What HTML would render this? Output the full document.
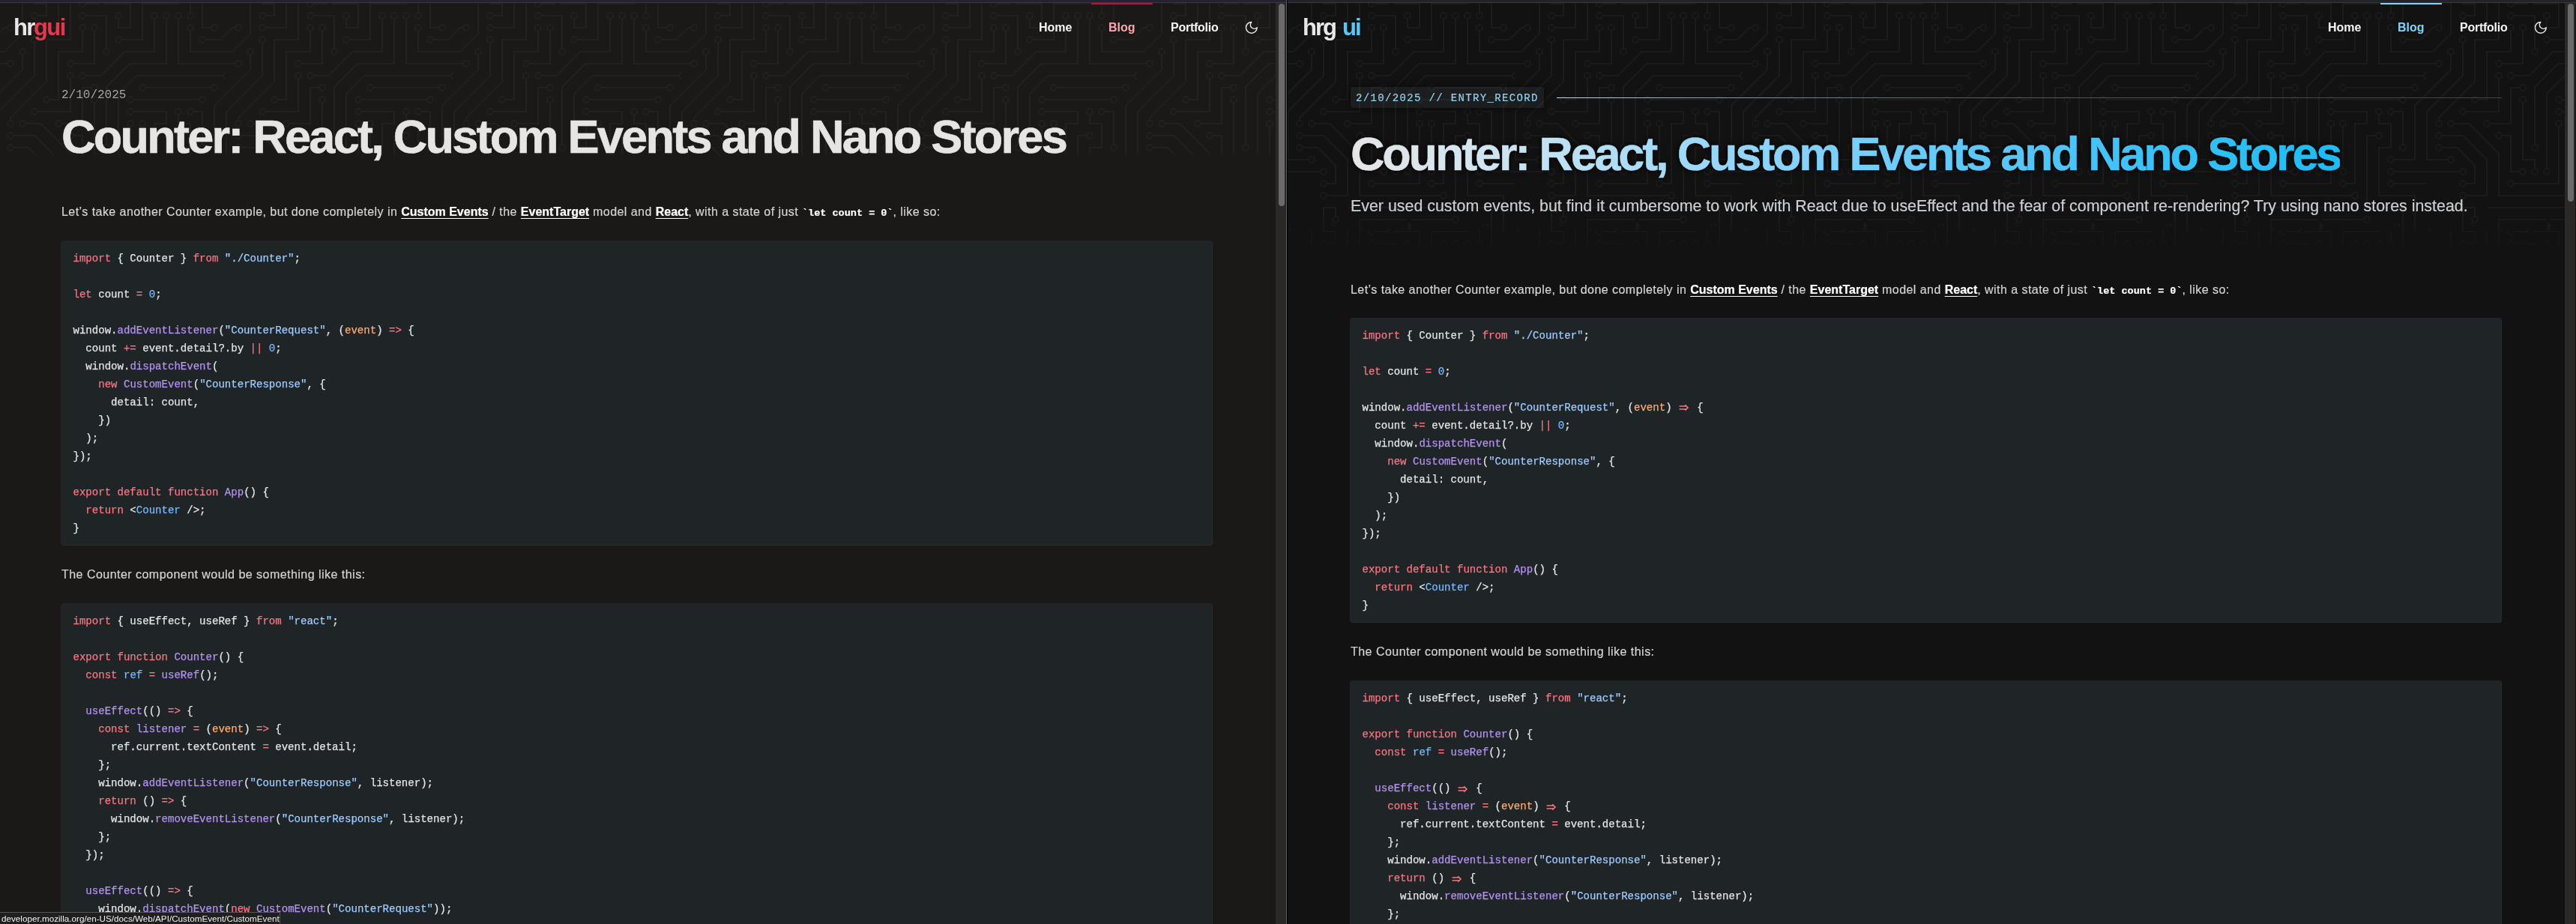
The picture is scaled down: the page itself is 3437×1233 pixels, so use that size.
<!DOCTYPE html><html><head><meta charset="utf-8"><style>html,body{margin:0;padding:0;background:#000;}body{width:3437px;height:1233px;overflow:hidden;position:relative;}.t{will-change:transform}</style></head><body>
<div style="position:absolute;left:0;top:0;width:1716px;height:1233px;background:#1a1917;overflow:hidden">
<svg style="position:absolute;left:0px;top:4px" width="1716" height="240"><defs><pattern id="pL" width="304" height="304" patternUnits="userSpaceOnUse" patternTransform="translate(-3,0)"><path d="M44.1 224a5 5 0 1 1 0 2H0v-2h44.1zm160 48a5 5 0 1 1 0 2H82v-2h122.1zm57.8-46a5 5 0 1 1 0-2H304v2h-42.1zm0 16a5 5 0 1 1 0-2H304v2h-42.1zm6.2-114a5 5 0 1 1 0 2h-86.2a5 5 0 1 1 0-2h86.2zm-256-48a5 5 0 1 1 0 2H0v-2h12.1zm185.8 34a5 5 0 1 1 0-2h86.2a5 5 0 1 1 0 2h-86.2zM258 12.1a5 5 0 1 1-2 0V0h2v12.1zm-64 208a5 5 0 1 1-2 0v-54.2a5 5 0 1 1 2 0v54.2zm48-198.2V80h62v2h-64V21.9a5 5 0 1 1 2 0zm16 16V64h46v2h-48V37.9a5 5 0 1 1 2 0zm-128 96V208h16v12.1a5 5 0 1 1-2 0V210h-16v-76.1a5 5 0 1 1 2 0zm-5.900-21.9a5 5 0 1 1 0 2H114v48H85.9a5 5 0 1 1 0-2H112v-48h12.1zm-6.2 130a5 5 0 1 1 0-2H176v-74.1a5 5 0 1 1 2 0V242h-60.1zm-16-64a5 5 0 1 1 0-2H114v48h10.1a5 5 0 1 1 0 2H112v-48h-10.1zM66 284.1a5 5 0 1 1-2 0V274H50v30h-2v-32h18v12.1zM236.1 176a5 5 0 1 1 0 2H226v94h48v32h-2v-30h-48v-98h12.1zm25.8-30a5 5 0 1 1 0-2H274v44.1a5 5 0 1 1-2 0V146h-10.1zm-64 96a5 5 0 1 1 0-2H208v-80h16v-14h-42.1a5 5 0 1 1 0-2H226v18h-16v80h-12.1zm86.2-210a5 5 0 1 1 0 2H272V0h2v32h10.1zM98 101.9V146H53.9a5 5 0 1 1 0-2H96v-42.1a5 5 0 1 1 2 0zM53.9 34a5 5 0 1 1 0-2H80V0h2v34H53.9zm60.1 3.9V66H82v64H69.9a5 5 0 1 1 0-2H80V64h32V37.9a5 5 0 1 1 2 0zM101.9 82a5 5 0 1 1 0-2H128V37.9a5 5 0 1 1 2 0V82h-28.1zm16-64a5 5 0 1 1 0-2H146v44.1a5 5 0 1 1-2 0V18h-26.1zm102.2 270a5 5 0 1 1 0 2H98v14h-2v-16h124.1zM242 149.9V160h16v34h-16v62h48v48h-2v-46h-48v-66h16v-30h-16v-12.1a5 5 0 1 1 2 0zM53.9 18a5 5 0 1 1 0-2H64V2H48V0h18v18H53.9zm112 32a5 5 0 1 1 0-2H192V0h50v2h-48v48h-28.1zm-48-48a5 5 0 0 1-9.8-2h2.07a3 3 0 1 0 5.66 0H178v34h-18V21.9a5 5 0 1 1 2 0V32h14V2h-58.1zm0 96a5 5 0 1 1 0-2H137l32-32h39V21.9a5 5 0 1 1 2 0V66h-40.17l-32 32H117.9zm28.1 90.1a5 5 0 1 1-2 0v-76.51L175.590 80H224V21.9a5 5 0 1 1 2 0V82h-49.59L146 112.41v75.69zm16 32a5 5 0 1 1-2 0v-99.51L184.590 96H300.1a5 5 0 0 1 3.9-3.9v2.07a3 3 0 0 0 0 5.66v2.07a5 5 0 0 1-3.9-3.9H185.41L162 121.41v98.69zm-144-64a5 5 0 1 1-2 0v-3.51l48-48V48h32V0h2v50H66v55.41l-48 48v2.69zM50 53.9v43.51l-48 48V208h26.1a5 5 0 1 1 0 2H0v-65.41l48-48V53.9a5 5 0 1 1 2 0zm-16 16V89.41l-34 34v-2.82l32-32V69.9a5 5 0 1 1 2 0zM12.1 32a5 5 0 1 1 0 2H9.41L0 43.41V40.6L8.59 32h3.51zm265.8 18a5 5 0 1 1 0-2h18.69l7.41-7.410v2.82L297.41 50H277.9zm-16 160a5 5 0 1 1 0-2H288v-71.41l16-16v2.82l-14 14V210h-28.1zm-208 32a5 5 0 1 1 0-2H64v-22.59L40.59 194H21.9a5 5 0 1 1 0-2H41.41L66 216.59V242H53.9zm150.2 14a5 5 0 1 1 0 2H96v-56.6L56.6 162H37.9a5 5 0 1 1 0-2h19.5L98 200.6V256h106.1zm-150.2 2a5 5 0 1 1 0-2H80v-46.59L48.59 178H21.9a5 5 0 1 1 0-2H49.41L82 208.59V258H53.9zM34 39.8v1.61L9.41 66H0v-2h8.59L32 40.59V0h2v39.8zM2 300.1a5 5 0 0 1 3.9 3.9H3.83A3 3 0 0 0 0 302.17V304h2v-3.9zm264.1-6a5 5 0 0 1 3.9 3.9h-2.07a3 3 0 0 0-5.66 0H260v-2h6.1zm-206 0a5 5 0 0 1 3.9 3.9h-2.07a3 3 0 0 0-5.66 0H56v-2h4.1zM134 304a5 5 0 0 1 3.9-3.9v2.07a3 3 0 0 0-1.83 1.83H134zm-36 0a5 5 0 0 1 3.9-3.9v2.07A3 3 0 0 0 100.07 304H98zm64-3.9V304h2v-3.9a3 3 0 0 0 0-5.66V292.3a5 5 0 0 1-2 0v7.8z" fill="#fff"/><g fill="#000"><circle cx="49" cy="225" r="3.0"/><circle cx="209" cy="273" r="3.0"/><circle cx="257" cy="225" r="3.0"/><circle cx="257" cy="241" r="3.0"/><circle cx="273" cy="129" r="3.0"/><circle cx="177" cy="129" r="3.0"/><circle cx="17" cy="81" r="3.0"/><circle cx="193" cy="113" r="3.0"/><circle cx="289" cy="113" r="3.0"/><circle cx="257" cy="17" r="3.0"/><circle cx="193" cy="225" r="3.0"/><circle cx="193" cy="161" r="3.0"/><circle cx="241" cy="17" r="3.0"/><circle cx="257" cy="33" r="3.0"/><circle cx="145" cy="225" r="3.0"/><circle cx="129" cy="129" r="3.0"/><circle cx="129" cy="113" r="3.0"/><circle cx="81" cy="161" r="3.0"/><circle cx="113" cy="241" r="3.0"/><circle cx="177" cy="161" r="3.0"/><circle cx="97" cy="177" r="3.0"/><circle cx="129" cy="225" r="3.0"/><circle cx="65" cy="289" r="3.0"/><circle cx="241" cy="177" r="3.0"/><circle cx="257" cy="145" r="3.0"/><circle cx="273" cy="193" r="3.0"/><circle cx="193" cy="241" r="3.0"/><circle cx="177" cy="145" r="3.0"/><circle cx="289" cy="33" r="3.0"/><circle cx="49" cy="145" r="3.0"/><circle cx="97" cy="97" r="3.0"/><circle cx="49" cy="33" r="3.0"/><circle cx="65" cy="129" r="3.0"/><circle cx="113" cy="33" r="3.0"/><circle cx="97" cy="81" r="3.0"/><circle cx="129" cy="33" r="3.0"/><circle cx="113" cy="17" r="3.0"/><circle cx="145" cy="65" r="3.0"/><circle cx="225" cy="289" r="3.0"/><circle cx="241" cy="145" r="3.0"/><circle cx="49" cy="17" r="3.0"/><circle cx="161" cy="49" r="3.0"/><circle cx="113" cy="1" r="3.0"/><circle cx="113" cy="305" r="3.0"/><circle cx="161" cy="17" r="3.0"/><circle cx="113" cy="97" r="3.0"/><circle cx="209" cy="17" r="3.0"/><circle cx="145" cy="193" r="3.0"/><circle cx="225" cy="17" r="3.0"/><circle cx="161" cy="225" r="3.0"/><circle cx="1" cy="97" r="3.0"/><circle cx="305" cy="97" r="3.0"/><circle cx="17" cy="161" r="3.0"/><circle cx="33" cy="209" r="3.0"/><circle cx="49" cy="49" r="3.0"/><circle cx="33" cy="65" r="3.0"/><circle cx="17" cy="33" r="3.0"/><circle cx="273" cy="49" r="3.0"/><circle cx="257" cy="209" r="3.0"/><circle cx="49" cy="241" r="3.0"/><circle cx="17" cy="193" r="3.0"/><circle cx="209" cy="257" r="3.0"/><circle cx="33" cy="161" r="3.0"/><circle cx="49" cy="257" r="3.0"/><circle cx="17" cy="177" r="3.0"/><circle cx="1" cy="1" r="3.0"/><circle cx="1" cy="305" r="3.0"/><circle cx="305" cy="1" r="3.0"/><circle cx="305" cy="305" r="3.0"/><circle cx="265.1" cy="-5" r="3.0"/><circle cx="265.1" cy="299" r="3.0"/><circle cx="59.1" cy="-5" r="3.0"/><circle cx="59.1" cy="299" r="3.0"/><circle cx="138.9" cy="1" r="3.0"/><circle cx="138.9" cy="305" r="3.0"/><circle cx="102.9" cy="1" r="3.0"/><circle cx="102.9" cy="305" r="3.0"/><circle cx="163" cy="287.4" r="3.0"/></g></pattern><linearGradient id="gL" x1="0" y1="0" x2="0" y2="240" gradientUnits="userSpaceOnUse"><stop offset="0.817" stop-color="#fff" stop-opacity="0.035"/><stop offset="0.871" stop-color="#fff" stop-opacity="0"/></linearGradient><mask id="mL" maskUnits="userSpaceOnUse" x="0" y="0" width="1716" height="240"><rect width="1716" height="240" fill="url(#pL)"/></mask></defs><rect width="1716" height="240" fill="url(#gL)" mask="url(#mL)"/></svg>
<div class="t" style="position:absolute;left:1386.00px;top:26.76px;white-space:pre;font:700 16px/19px 'Liberation Sans', sans-serif;color:#f5f5f4;letter-spacing:0px;">Home</div>
<div class="t" style="position:absolute;left:1479.00px;top:26.76px;white-space:pre;font:700 16px/19px 'Liberation Sans', sans-serif;color:#fda4af;letter-spacing:0px;">Blog</div>
<div class="t" style="position:absolute;left:1562.00px;top:26.76px;white-space:pre;font:700 16px/19px 'Liberation Sans', sans-serif;color:#f5f5f4;letter-spacing:-0.26px;">Portfolio</div>
<svg style="position:absolute;left:1660.4px;top:26.5px" width="19.7" height="19.7" viewBox="0 0 24 24" fill="none" stroke="#e7e5e4" stroke-width="1.75" stroke-linecap="round" stroke-linejoin="round"><path d="M12 3a6 6 0 0 0 9 9 9 9 0 1 1-9-9Z"/></svg>
<div style="position:absolute;left:1456px;top:4px;width:82px;height:2px;background:#be123c"></div>
<div class="t" style="position:absolute;left:18.00px;top:17.76px;white-space:pre;font:700 31px/37px 'Liberation Sans', sans-serif;color:#e8e8e8;letter-spacing:-1.6px;">hr</div>
<div class="t" style="position:absolute;left:45.00px;top:17.76px;white-space:pre;font:700 31px/37px 'Liberation Sans', sans-serif;color:#e5384f;letter-spacing:-1.6px;">gui</div>
<div class="t" style="position:absolute;left:81.50px;top:118.24px;white-space:pre;font:400 16px/19px 'Liberation Mono', monospace;color:#a8a29e;letter-spacing:0px;">2/10/2025</div>
<div class="t" style="position:absolute;left:82.10px;top:144.17px;white-space:pre;font:700 63px/76px 'Liberation Sans', sans-serif;color:#e7e5e4;letter-spacing:-2.74px;-webkit-text-stroke:0.6px #e7e5e4;">Counter: React, Custom Events and Nano Stores</div>
<div class="t" style="position:absolute;left:82.00px;top:272.56px;white-space:pre;font:400 16px/19px 'Liberation Sans', sans-serif;color:#d6d3d1;letter-spacing:0.45px;-webkit-text-stroke:0.2px currentColor;">Let’s take another Counter example, but done completely in <span style="font-weight:700;font-size:16px;letter-spacing:0;color:#fff;text-decoration:underline;text-underline-offset:3px;text-decoration-thickness:1px">Custom Events</span> / the <span style="font-weight:700;font-size:16px;letter-spacing:0;color:#fff;text-decoration:underline;text-underline-offset:3px;text-decoration-thickness:1px">EventTarget</span> model and <span style="font-weight:700;font-size:16px;letter-spacing:0;color:#fff;text-decoration:underline;text-underline-offset:3px;text-decoration-thickness:1px">React</span>, with a state of just <span style="font:700 13.5px 'Liberation Mono', monospace;letter-spacing:0;color:#fff">`let count = 0`</span>, like so:</div>
<div class="t" style="position:absolute;left:81px;top:321px;width:1537px;height:407px;background:#1f2427;border-radius:4px;box-shadow:inset -1px -1px 0 rgba(255,255,255,0.04);overflow:hidden"><pre style="margin:0;position:absolute;left:16.50px;top:11.51px;font:400 14.05px/24px 'Liberation Mono', monospace;color:#E1E4E8;white-space:pre;-webkit-text-stroke:0.25px currentColor"><span style="color:#F97583">import</span> { Counter } <span style="color:#F97583">from</span> <span style="color:#9ECBFF">&quot;./Counter&quot;</span>;
 
<span style="color:#F97583">let</span> count <span style="color:#F97583">=</span> <span style="color:#79B8FF">0</span>;
 
window.<span style="color:#B392F0">addEventListener</span>(<span style="color:#9ECBFF">&quot;CounterRequest&quot;</span>, (<span style="color:#FFAB70">event</span>) <span style="color:#F97583">=&gt;</span> {
  count <span style="color:#F97583">+=</span> event.detail?.by <span style="color:#F97583">||</span> <span style="color:#79B8FF">0</span>;
  window.<span style="color:#B392F0">dispatchEvent</span>(
    <span style="color:#F97583">new</span> <span style="color:#B392F0">CustomEvent</span>(<span style="color:#9ECBFF">&quot;CounterResponse&quot;</span>, {
      detail: count,
    })
  );
});
 
<span style="color:#F97583">export</span> <span style="color:#F97583">default</span> <span style="color:#F97583">function</span> <span style="color:#B392F0">App</span>() {
  <span style="color:#F97583">return</span> &lt;<span style="color:#79B8FF">Counter</span> /&gt;;
}</pre></div>
<div class="t" style="position:absolute;left:82.00px;top:756.56px;white-space:pre;font:400 16px/19px 'Liberation Sans', sans-serif;color:#d6d3d1;letter-spacing:0.47px;-webkit-text-stroke:0.2px currentColor;">The Counter component would be something like this:</div>
<div class="t" style="position:absolute;left:81px;top:804.5px;width:1537px;height:595.5px;background:#1f2427;border-radius:4px;box-shadow:inset -1px -1px 0 rgba(255,255,255,0.04);overflow:hidden"><pre style="margin:0;position:absolute;left:16.50px;top:12.01px;font:400 14.05px/24px 'Liberation Mono', monospace;color:#E1E4E8;white-space:pre;-webkit-text-stroke:0.25px currentColor"><span style="color:#F97583">import</span> { useEffect, useRef } <span style="color:#F97583">from</span> <span style="color:#9ECBFF">&quot;react&quot;</span>;
 
<span style="color:#F97583">export</span> <span style="color:#F97583">function</span> <span style="color:#B392F0">Counter</span>() {
  <span style="color:#F97583">const</span> <span style="color:#79B8FF">ref</span> <span style="color:#F97583">=</span> <span style="color:#B392F0">useRef</span>();
 
  <span style="color:#B392F0">useEffect</span>(() <span style="color:#F97583">=&gt;</span> {
    <span style="color:#F97583">const</span> <span style="color:#B392F0">listener</span> <span style="color:#F97583">=</span> (<span style="color:#FFAB70">event</span>) <span style="color:#F97583">=&gt;</span> {
      ref.current.textContent <span style="color:#F97583">=</span> event.detail;
    };
    window.<span style="color:#B392F0">addEventListener</span>(<span style="color:#9ECBFF">&quot;CounterResponse&quot;</span>, listener);
    <span style="color:#F97583">return</span> () <span style="color:#F97583">=&gt;</span> {
      window.<span style="color:#B392F0">removeEventListener</span>(<span style="color:#9ECBFF">&quot;CounterResponse&quot;</span>, listener);
    };
  });
 
  <span style="color:#B392F0">useEffect</span>(() <span style="color:#F97583">=&gt;</span> {
    window.<span style="color:#B392F0">dispatchEvent</span>(<span style="color:#F97583">new</span> <span style="color:#B392F0">CustomEvent</span>(<span style="color:#9ECBFF">&quot;CounterRequest&quot;</span>));
  }, []);
 
  <span style="color:#F97583">return</span> &lt;<span style="color:#79B8FF">div</span> <span style="color:#B392F0">ref</span><span style="color:#F97583">=</span>{ref}&gt;&lt;/<span style="color:#79B8FF">div</span>&gt;;
}</pre></div>
<div style="position:absolute;left:1702px;top:4px;width:14px;height:1229px;background:#2a2928"></div>
<div style="position:absolute;left:1706px;top:5px;width:8px;height:269.7px;background:#6b6b6b;border-radius:4px"></div>
<div style="position:absolute;left:0;top:0;width:1716px;height:3px;background:#252333"></div>
<div style="position:absolute;left:0;top:3px;width:1716px;height:1px;background:#38373d"></div>
<div style="position:absolute;left:0;top:1217px;width:374px;height:16px;background:#1f1f1f;border-top:1px solid #555;border-right:1px solid #555;box-sizing:border-box"></div>
<div class="t" style="position:absolute;left:2.00px;top:1218.95px;white-space:pre;font:400 11.7px/14px 'Liberation Sans', sans-serif;color:#f0f0f0;letter-spacing:0px;">developer.mozilla.org/en-US/docs/Web/API/CustomEvent/CustomEvent</div>
</div>
<div style="position:absolute;left:1716px;top:0;width:1px;height:1233px;background:#5a5a5a"></div>
<div style="position:absolute;left:1717px;top:0;width:1px;height:1233px;background:#000"></div>
<div style="position:absolute;left:1718px;top:0;width:1719px;height:1233px;background:#121213;overflow:hidden">
<div style="position:absolute;left:-1718px;top:0;width:3437px;height:1233px">
<svg style="position:absolute;left:1718px;top:4px" width="1719" height="350"><defs><pattern id="pR" width="304" height="304" patternUnits="userSpaceOnUse" patternTransform="translate(-1,0)"><path d="M44.1 224a5 5 0 1 1 0 2H0v-2h44.1zm160 48a5 5 0 1 1 0 2H82v-2h122.1zm57.8-46a5 5 0 1 1 0-2H304v2h-42.1zm0 16a5 5 0 1 1 0-2H304v2h-42.1zm6.2-114a5 5 0 1 1 0 2h-86.2a5 5 0 1 1 0-2h86.2zm-256-48a5 5 0 1 1 0 2H0v-2h12.1zm185.8 34a5 5 0 1 1 0-2h86.2a5 5 0 1 1 0 2h-86.2zM258 12.1a5 5 0 1 1-2 0V0h2v12.1zm-64 208a5 5 0 1 1-2 0v-54.2a5 5 0 1 1 2 0v54.2zm48-198.2V80h62v2h-64V21.9a5 5 0 1 1 2 0zm16 16V64h46v2h-48V37.9a5 5 0 1 1 2 0zm-128 96V208h16v12.1a5 5 0 1 1-2 0V210h-16v-76.1a5 5 0 1 1 2 0zm-5.900-21.9a5 5 0 1 1 0 2H114v48H85.9a5 5 0 1 1 0-2H112v-48h12.1zm-6.2 130a5 5 0 1 1 0-2H176v-74.1a5 5 0 1 1 2 0V242h-60.1zm-16-64a5 5 0 1 1 0-2H114v48h10.1a5 5 0 1 1 0 2H112v-48h-10.1zM66 284.1a5 5 0 1 1-2 0V274H50v30h-2v-32h18v12.1zM236.1 176a5 5 0 1 1 0 2H226v94h48v32h-2v-30h-48v-98h12.1zm25.8-30a5 5 0 1 1 0-2H274v44.1a5 5 0 1 1-2 0V146h-10.1zm-64 96a5 5 0 1 1 0-2H208v-80h16v-14h-42.1a5 5 0 1 1 0-2H226v18h-16v80h-12.1zm86.2-210a5 5 0 1 1 0 2H272V0h2v32h10.1zM98 101.9V146H53.9a5 5 0 1 1 0-2H96v-42.1a5 5 0 1 1 2 0zM53.9 34a5 5 0 1 1 0-2H80V0h2v34H53.9zm60.1 3.9V66H82v64H69.9a5 5 0 1 1 0-2H80V64h32V37.9a5 5 0 1 1 2 0zM101.9 82a5 5 0 1 1 0-2H128V37.9a5 5 0 1 1 2 0V82h-28.1zm16-64a5 5 0 1 1 0-2H146v44.1a5 5 0 1 1-2 0V18h-26.1zm102.2 270a5 5 0 1 1 0 2H98v14h-2v-16h124.1zM242 149.9V160h16v34h-16v62h48v48h-2v-46h-48v-66h16v-30h-16v-12.1a5 5 0 1 1 2 0zM53.9 18a5 5 0 1 1 0-2H64V2H48V0h18v18H53.9zm112 32a5 5 0 1 1 0-2H192V0h50v2h-48v48h-28.1zm-48-48a5 5 0 0 1-9.8-2h2.07a3 3 0 1 0 5.66 0H178v34h-18V21.9a5 5 0 1 1 2 0V32h14V2h-58.1zm0 96a5 5 0 1 1 0-2H137l32-32h39V21.9a5 5 0 1 1 2 0V66h-40.17l-32 32H117.9zm28.1 90.1a5 5 0 1 1-2 0v-76.51L175.590 80H224V21.9a5 5 0 1 1 2 0V82h-49.59L146 112.41v75.69zm16 32a5 5 0 1 1-2 0v-99.51L184.590 96H300.1a5 5 0 0 1 3.9-3.9v2.07a3 3 0 0 0 0 5.66v2.07a5 5 0 0 1-3.9-3.9H185.41L162 121.41v98.69zm-144-64a5 5 0 1 1-2 0v-3.51l48-48V48h32V0h2v50H66v55.41l-48 48v2.69zM50 53.9v43.51l-48 48V208h26.1a5 5 0 1 1 0 2H0v-65.41l48-48V53.9a5 5 0 1 1 2 0zm-16 16V89.41l-34 34v-2.82l32-32V69.9a5 5 0 1 1 2 0zM12.1 32a5 5 0 1 1 0 2H9.41L0 43.41V40.6L8.59 32h3.51zm265.8 18a5 5 0 1 1 0-2h18.69l7.41-7.410v2.82L297.41 50H277.9zm-16 160a5 5 0 1 1 0-2H288v-71.41l16-16v2.82l-14 14V210h-28.1zm-208 32a5 5 0 1 1 0-2H64v-22.59L40.59 194H21.9a5 5 0 1 1 0-2H41.41L66 216.59V242H53.9zm150.2 14a5 5 0 1 1 0 2H96v-56.6L56.6 162H37.9a5 5 0 1 1 0-2h19.5L98 200.6V256h106.1zm-150.2 2a5 5 0 1 1 0-2H80v-46.59L48.59 178H21.9a5 5 0 1 1 0-2H49.41L82 208.59V258H53.9zM34 39.8v1.61L9.41 66H0v-2h8.59L32 40.59V0h2v39.8zM2 300.1a5 5 0 0 1 3.9 3.9H3.83A3 3 0 0 0 0 302.17V304h2v-3.9zm264.1-6a5 5 0 0 1 3.9 3.9h-2.07a3 3 0 0 0-5.66 0H260v-2h6.1zm-206 0a5 5 0 0 1 3.9 3.9h-2.07a3 3 0 0 0-5.66 0H56v-2h4.1zM134 304a5 5 0 0 1 3.9-3.9v2.07a3 3 0 0 0-1.83 1.83H134zm-36 0a5 5 0 0 1 3.9-3.9v2.07A3 3 0 0 0 100.07 304H98zm64-3.9V304h2v-3.9a3 3 0 0 0 0-5.66V292.3a5 5 0 0 1-2 0v7.8z" fill="#fff"/><g fill="#000"><circle cx="49" cy="225" r="3.0"/><circle cx="209" cy="273" r="3.0"/><circle cx="257" cy="225" r="3.0"/><circle cx="257" cy="241" r="3.0"/><circle cx="273" cy="129" r="3.0"/><circle cx="177" cy="129" r="3.0"/><circle cx="17" cy="81" r="3.0"/><circle cx="193" cy="113" r="3.0"/><circle cx="289" cy="113" r="3.0"/><circle cx="257" cy="17" r="3.0"/><circle cx="193" cy="225" r="3.0"/><circle cx="193" cy="161" r="3.0"/><circle cx="241" cy="17" r="3.0"/><circle cx="257" cy="33" r="3.0"/><circle cx="145" cy="225" r="3.0"/><circle cx="129" cy="129" r="3.0"/><circle cx="129" cy="113" r="3.0"/><circle cx="81" cy="161" r="3.0"/><circle cx="113" cy="241" r="3.0"/><circle cx="177" cy="161" r="3.0"/><circle cx="97" cy="177" r="3.0"/><circle cx="129" cy="225" r="3.0"/><circle cx="65" cy="289" r="3.0"/><circle cx="241" cy="177" r="3.0"/><circle cx="257" cy="145" r="3.0"/><circle cx="273" cy="193" r="3.0"/><circle cx="193" cy="241" r="3.0"/><circle cx="177" cy="145" r="3.0"/><circle cx="289" cy="33" r="3.0"/><circle cx="49" cy="145" r="3.0"/><circle cx="97" cy="97" r="3.0"/><circle cx="49" cy="33" r="3.0"/><circle cx="65" cy="129" r="3.0"/><circle cx="113" cy="33" r="3.0"/><circle cx="97" cy="81" r="3.0"/><circle cx="129" cy="33" r="3.0"/><circle cx="113" cy="17" r="3.0"/><circle cx="145" cy="65" r="3.0"/><circle cx="225" cy="289" r="3.0"/><circle cx="241" cy="145" r="3.0"/><circle cx="49" cy="17" r="3.0"/><circle cx="161" cy="49" r="3.0"/><circle cx="113" cy="1" r="3.0"/><circle cx="113" cy="305" r="3.0"/><circle cx="161" cy="17" r="3.0"/><circle cx="113" cy="97" r="3.0"/><circle cx="209" cy="17" r="3.0"/><circle cx="145" cy="193" r="3.0"/><circle cx="225" cy="17" r="3.0"/><circle cx="161" cy="225" r="3.0"/><circle cx="1" cy="97" r="3.0"/><circle cx="305" cy="97" r="3.0"/><circle cx="17" cy="161" r="3.0"/><circle cx="33" cy="209" r="3.0"/><circle cx="49" cy="49" r="3.0"/><circle cx="33" cy="65" r="3.0"/><circle cx="17" cy="33" r="3.0"/><circle cx="273" cy="49" r="3.0"/><circle cx="257" cy="209" r="3.0"/><circle cx="49" cy="241" r="3.0"/><circle cx="17" cy="193" r="3.0"/><circle cx="209" cy="257" r="3.0"/><circle cx="33" cy="161" r="3.0"/><circle cx="49" cy="257" r="3.0"/><circle cx="17" cy="177" r="3.0"/><circle cx="1" cy="1" r="3.0"/><circle cx="1" cy="305" r="3.0"/><circle cx="305" cy="1" r="3.0"/><circle cx="305" cy="305" r="3.0"/><circle cx="265.1" cy="-5" r="3.0"/><circle cx="265.1" cy="299" r="3.0"/><circle cx="59.1" cy="-5" r="3.0"/><circle cx="59.1" cy="299" r="3.0"/><circle cx="138.9" cy="1" r="3.0"/><circle cx="138.9" cy="305" r="3.0"/><circle cx="102.9" cy="1" r="3.0"/><circle cx="102.9" cy="305" r="3.0"/><circle cx="163" cy="287.4" r="3.0"/></g></pattern><linearGradient id="gR" x1="0" y1="0" x2="0" y2="350" gradientUnits="userSpaceOnUse"><stop offset="0.814" stop-color="#fff" stop-opacity="0.04"/><stop offset="0.969" stop-color="#fff" stop-opacity="0"/></linearGradient><mask id="mR" maskUnits="userSpaceOnUse" x="0" y="0" width="1719" height="350"><rect width="1719" height="350" fill="url(#pR)"/></mask></defs><rect width="1719" height="350" fill="url(#gR)" mask="url(#mR)"/></svg>
<div class="t" style="position:absolute;left:3106.00px;top:26.76px;white-space:pre;font:700 16px/19px 'Liberation Sans', sans-serif;color:#f5f5f4;letter-spacing:0px;">Home</div>
<div class="t" style="position:absolute;left:3199.00px;top:26.76px;white-space:pre;font:700 16px/19px 'Liberation Sans', sans-serif;color:#7dd3fc;letter-spacing:0px;">Blog</div>
<div class="t" style="position:absolute;left:3282.00px;top:26.76px;white-space:pre;font:700 16px/19px 'Liberation Sans', sans-serif;color:#f5f5f4;letter-spacing:-0.26px;">Portfolio</div>
<svg style="position:absolute;left:3380.4px;top:26.5px" width="19.7" height="19.7" viewBox="0 0 24 24" fill="none" stroke="#e7e5e4" stroke-width="1.75" stroke-linecap="round" stroke-linejoin="round"><path d="M12 3a6 6 0 0 0 9 9 9 9 0 1 1-9-9Z"/></svg>
<div style="position:absolute;left:3176px;top:4px;width:82px;height:2px;background:#7dd3fc"></div>
<div class="t" style="position:absolute;left:1738.00px;top:17.51px;white-space:pre;font:700 31px/37px 'Liberation Sans', sans-serif;color:#e8e8e8;letter-spacing:-2px;">hrg</div>
<div class="t" style="position:absolute;left:1791.00px;top:17.51px;white-space:pre;font:700 31px/37px 'Liberation Sans', sans-serif;color:#5ec6f7;letter-spacing:-2px;">ui</div>
<div style="position:absolute;left:1802px;top:116px;width:258px;height:28px;background:rgba(200,225,240,0.06);border-radius:3px;box-shadow:0 0 8px rgba(0,0,0,0.55)"></div>
<div class="t" style="position:absolute;left:1809.00px;top:122.77px;white-space:pre;font:400 14px/17px 'Liberation Mono', monospace;color:#92d1ef;letter-spacing:1.35px;-webkit-text-stroke:0.2px currentColor;">2/10/2025 // ENTRY_RECORD</div>
<div style="position:absolute;left:2077px;top:130px;width:1261px;height:1px;background:linear-gradient(90deg,#cadbe4 0%,#8fa3ad 15%,#5a6063 40%,#4a4c4d 70%,#444 100%)"></div>
<div class="t" style="position:absolute;left:1802.00px;top:167.17px;white-space:pre;font:700 63px/76px 'Liberation Sans', sans-serif;color:rgba(0,0,0,0);letter-spacing:-3.18px;text-shadow:0 0 10px rgba(0,0,0,0.85),0 0 4px rgba(0,0,0,0.6);">Counter: React, Custom Events and Nano Stores</div>
<div class="t" style="position:absolute;left:1802.00px;top:167.17px;white-space:pre;font:700 63px/76px 'Liberation Sans', sans-serif;color:#e5e5e5;letter-spacing:-3.18px;background:linear-gradient(90deg,#e5e5e5 0%,#d4e6f0 12%,#b5dff5 25%,#8cd4f9 42%,#5fc8fa 62%,#3cc2f8 80%,#1abdf6 100%);-webkit-background-clip:text;background-clip:text;-webkit-text-fill-color:transparent;-webkit-text-stroke:0.6px transparent;">Counter: React, Custom Events and Nano Stores</div>
<div class="t" style="position:absolute;left:1802.00px;top:262.28px;white-space:pre;font:400 21.4px/26px 'Liberation Sans', sans-serif;color:#cbd0d4;letter-spacing:0px;-webkit-text-stroke:0.2px currentColor;">Ever used custom events, but find it cumbersome to work with React due to useEffect and the fear of component re-rendering? Try using nano stores instead.</div>
<div class="t" style="position:absolute;left:1802.00px;top:376.66px;white-space:pre;font:400 16px/19px 'Liberation Sans', sans-serif;color:#d6d3d1;letter-spacing:0.45px;-webkit-text-stroke:0.2px currentColor;">Let’s take another Counter example, but done completely in <span style="font-weight:700;font-size:16px;letter-spacing:0;color:#fff;text-decoration:underline;text-underline-offset:3px;text-decoration-thickness:1px">Custom Events</span> / the <span style="font-weight:700;font-size:16px;letter-spacing:0;color:#fff;text-decoration:underline;text-underline-offset:3px;text-decoration-thickness:1px">EventTarget</span> model and <span style="font-weight:700;font-size:16px;letter-spacing:0;color:#fff;text-decoration:underline;text-underline-offset:3px;text-decoration-thickness:1px">React</span>, with a state of just <span style="font:700 13.5px 'Liberation Mono', monospace;letter-spacing:0;color:#fff">`let count = 0`</span>, like so:</div>
<div class="t" style="position:absolute;left:1801px;top:424.3px;width:1537px;height:406.99999999999994px;background:#1f2427;border-radius:4px;box-shadow:inset -1px -1px 0 rgba(255,255,255,0.04);overflow:hidden"><pre style="margin:0;position:absolute;left:16.50px;top:11.51px;font:400 14.05px/24px 'Liberation Mono', monospace;color:#E1E4E8;white-space:pre;-webkit-text-stroke:0.25px currentColor"><span style="color:#F97583">import</span> { Counter } <span style="color:#F97583">from</span> <span style="color:#9ECBFF">&quot;./Counter&quot;</span>;
 
<span style="color:#F97583">let</span> count <span style="color:#F97583">=</span> <span style="color:#79B8FF">0</span>;
 
window.<span style="color:#B392F0">addEventListener</span>(<span style="color:#9ECBFF">&quot;CounterRequest&quot;</span>, (<span style="color:#FFAB70">event</span>) <span style="display:inline-block;width:16.86px;height:0;position:relative"><svg width="17" height="12" viewBox="0 0 17 12" style="position:absolute;left:0;top:-9.2px"><path d="M1.6 4H11.2M1.6 8H11.2M9.2 2.4L13 6L9.2 9.6" fill="none" stroke="#F97583" stroke-width="1.6" stroke-linejoin="miter"/></svg></span> {
  count <span style="color:#F97583">+=</span> event.detail?.by <span style="color:#F97583">||</span> <span style="color:#79B8FF">0</span>;
  window.<span style="color:#B392F0">dispatchEvent</span>(
    <span style="color:#F97583">new</span> <span style="color:#B392F0">CustomEvent</span>(<span style="color:#9ECBFF">&quot;CounterResponse&quot;</span>, {
      detail: count,
    })
  );
});
 
<span style="color:#F97583">export</span> <span style="color:#F97583">default</span> <span style="color:#F97583">function</span> <span style="color:#B392F0">App</span>() {
  <span style="color:#F97583">return</span> &lt;<span style="color:#79B8FF">Counter</span> /&gt;;
}</pre></div>
<div class="t" style="position:absolute;left:1802.00px;top:859.86px;white-space:pre;font:400 16px/19px 'Liberation Sans', sans-serif;color:#d6d3d1;letter-spacing:0.47px;-webkit-text-stroke:0.2px currentColor;">The Counter component would be something like this:</div>
<div class="t" style="position:absolute;left:1801px;top:907.8px;width:1537px;height:492.20000000000005px;background:#1f2427;border-radius:4px;box-shadow:inset -1px -1px 0 rgba(255,255,255,0.04);overflow:hidden"><pre style="margin:0;position:absolute;left:16.50px;top:12.01px;font:400 14.05px/24px 'Liberation Mono', monospace;color:#E1E4E8;white-space:pre;-webkit-text-stroke:0.25px currentColor"><span style="color:#F97583">import</span> { useEffect, useRef } <span style="color:#F97583">from</span> <span style="color:#9ECBFF">&quot;react&quot;</span>;
 
<span style="color:#F97583">export</span> <span style="color:#F97583">function</span> <span style="color:#B392F0">Counter</span>() {
  <span style="color:#F97583">const</span> <span style="color:#79B8FF">ref</span> <span style="color:#F97583">=</span> <span style="color:#B392F0">useRef</span>();
 
  <span style="color:#B392F0">useEffect</span>(() <span style="display:inline-block;width:16.86px;height:0;position:relative"><svg width="17" height="12" viewBox="0 0 17 12" style="position:absolute;left:0;top:-9.2px"><path d="M1.6 4H11.2M1.6 8H11.2M9.2 2.4L13 6L9.2 9.6" fill="none" stroke="#F97583" stroke-width="1.6" stroke-linejoin="miter"/></svg></span> {
    <span style="color:#F97583">const</span> <span style="color:#B392F0">listener</span> <span style="color:#F97583">=</span> (<span style="color:#FFAB70">event</span>) <span style="display:inline-block;width:16.86px;height:0;position:relative"><svg width="17" height="12" viewBox="0 0 17 12" style="position:absolute;left:0;top:-9.2px"><path d="M1.6 4H11.2M1.6 8H11.2M9.2 2.4L13 6L9.2 9.6" fill="none" stroke="#F97583" stroke-width="1.6" stroke-linejoin="miter"/></svg></span> {
      ref.current.textContent <span style="color:#F97583">=</span> event.detail;
    };
    window.<span style="color:#B392F0">addEventListener</span>(<span style="color:#9ECBFF">&quot;CounterResponse&quot;</span>, listener);
    <span style="color:#F97583">return</span> () <span style="display:inline-block;width:16.86px;height:0;position:relative"><svg width="17" height="12" viewBox="0 0 17 12" style="position:absolute;left:0;top:-9.2px"><path d="M1.6 4H11.2M1.6 8H11.2M9.2 2.4L13 6L9.2 9.6" fill="none" stroke="#F97583" stroke-width="1.6" stroke-linejoin="miter"/></svg></span> {
      window.<span style="color:#B392F0">removeEventListener</span>(<span style="color:#9ECBFF">&quot;CounterResponse&quot;</span>, listener);
    };
  });
 
  <span style="color:#B392F0">useEffect</span>(() <span style="display:inline-block;width:16.86px;height:0;position:relative"><svg width="17" height="12" viewBox="0 0 17 12" style="position:absolute;left:0;top:-9.2px"><path d="M1.6 4H11.2M1.6 8H11.2M9.2 2.4L13 6L9.2 9.6" fill="none" stroke="#F97583" stroke-width="1.6" stroke-linejoin="miter"/></svg></span> {
    window.<span style="color:#B392F0">dispatchEvent</span>(<span style="color:#F97583">new</span> <span style="color:#B392F0">CustomEvent</span>(<span style="color:#9ECBFF">&quot;CounterRequest&quot;</span>));
  }, []);
 
  <span style="color:#F97583">return</span> &lt;<span style="color:#79B8FF">div</span> <span style="color:#B392F0">ref</span><span style="color:#F97583">=</span>{ref}&gt;&lt;/<span style="color:#79B8FF">div</span>&gt;;
}</pre></div>
<div style="position:absolute;left:3422px;top:4px;width:14px;height:1229px;background:#2a2928"></div>
<div style="position:absolute;left:3426px;top:5px;width:8px;height:263.7px;background:#6b6b6b;border-radius:4px"></div>
</div>
<div style="position:absolute;left:0;top:0;width:1719px;height:3px;background:#232328"></div>
<div style="position:absolute;left:0;top:3px;width:1719px;height:1px;background:#38373d"></div>
</div>
</body></html>
